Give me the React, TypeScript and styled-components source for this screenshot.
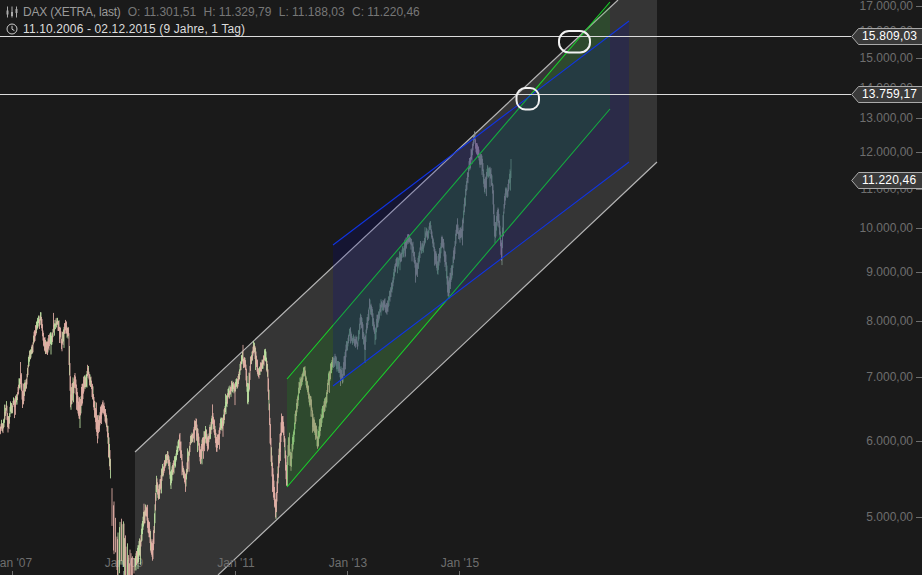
import React from "react";
import styled, { createGlobalStyle } from "styled-components";

const Global = createGlobalStyle`
  html, body { margin: 0; padding: 0; background: #1a1a1a; }
  body { font-family: "Liberation Sans", Arial, sans-serif; }
`;

const Chart = styled.div`
  position: relative;
  width: 922px;
  height: 575px;
  overflow: hidden;
  background: #1a1a1a;
  font-size: 12px;
`;
const Plot = styled.svg`
  position: absolute;
  inset: 0;
  display: block;
`;
const Header = styled.div`
  position: absolute;
  left: 0;
  top: 5px;
  display: flex;
  flex-direction: column;
  gap: 3px;
  align-items: flex-start;
`;
const HeaderRow = styled.div`
  display: flex;
  align-items: center;
  height: 14px;
  padding: 0 5px 0 6px;
  background: #1a1a1a;
  color: #777;
  line-height: 14px;
  white-space: nowrap;
`;
const RowIcon = styled.svg`
  width: 12px;
  height: 12px;
  margin-right: 5px;
  flex: none;
`;
const Title = styled.span`
  color: #999;
  margin-right: 7px;
  letter-spacing: -0.22px;
`;
const Quote = styled.span`
  margin-right: 7.4px;
`;
const Range = styled.span`
  color: #ddd;
  letter-spacing: 0.13px;
`;
const YLabel = styled.div<{ $y: number }>`
  position: absolute;
  right: 0;
  top: ${(p) => p.$y - 7}px;
  height: 16px;
  line-height: 16px;
  color: #6e6e6e;
  display: flex;
  align-items: center;
  gap: 3px;
`;
const Tick = styled.i`
  display: block;
  width: 6px;
  height: 1px;
  background: #6e6e6e;
`;
const XLabel = styled.div<{ $x: number }>`
  position: absolute;
  left: ${(p) => p.$x - 30}px;
  width: 60px;
  text-align: center;
  top: 556px;
  line-height: 14px;
  color: #6e6e6e;
`;
const XTick = styled.i<{ $x: number }>`
  position: absolute;
  left: ${(p) => p.$x}px;
  top: 571px;
  width: 1px;
  height: 4px;
  background: #6e6e6e;
`;
const Tag = styled.div<{ $y: number }>`
  position: absolute;
  left: 851px;
  top: ${(p) => p.$y - 8}px;
  width: 71px;
  height: 17px;
  color: #fff;
  line-height: 17px;
`;
const TagShape = styled.svg`
  position: absolute;
  inset: 0;
`;
const TagText = styled.span`
  position: absolute;
  left: 11px;
  top: 0;
  letter-spacing: 0.2px;
`;

const MAIN: [number, number, number][] = [
  [0,433,3],[7,412,3],[8,426,4],[12,405,3],[18,397,3],[21,378,3],[23,405,6],[27,380,2],[30,355,3],[35,335,4],[38,322,4],[41,318,4],[44,340,5],[47,352,5],[51,338,5],[54,325,2],[58,322,3],[62,345,4],[66,320,4],[69,335,3],[71,405,10],[75,380,5],[80,415,12],[84,385,6],[88,368,3],[92,385,4],[98,430,9],[102,405,4],[105,415,5],[108,430,5],[111,480,8],[113,530,30],[116,535,38],[118,560,30],[120,545,25],[124,540,30],[126,560,25],[128,565,20],[130,570,20],[133,572,8],[140,550,6],[144,520,6],[147,510,5],[150,530,8],[153,552,6],[157,487,5],[159,498,5],[163,472,5],[168,455,3],[171,483,7],[175,462,3],[180,440,3],[183,465,3],[186,478,4],[191,440,3],[196,422,3],[201,460,7],[206,427,4],[208,447,5],[213,422,5],[217,447,5],[223,422,4],[228,395,3],[232,385,4],[237,382,3],[240,370,3],[243,355,3],[246,370,4],[248,400,8],[251,365,3],[255,347,4],[258,370,4],[262,365,3],[265,352,4],[268,372,4],[270,420,5],[272,460,8],[276,510,8],[278,480,6],[282,420,7],[285,440,6],[287,480,6],[289,437,4],[291,462,5],[296,415,4],[300,385,4],[305,370,3],[309,390,4],[313,415,5],[318,440,7],[322,420,5],[327,395,4],[332,365,4],[335,358,4],[339,365,5],[343,375,5],[347,345,3],[350,335,2],[355,338,3],[358,342,3],[361,322,3],[365,345,5],[368,318,3],[370,300,3],[374,325,4],[376,332,5],[380,308,3],[383,302,3],[387,312,4],[392,290,3],[395,272,3],[400,255,3],[407,240,3],[412,245,3],[417,268,6],[421,250,3],[425,243,3],[430,228,2],[434,245,3],[438,268,6],[443,240,3],[446,262,6],[449,295,7],[453,265,4],[457,232,4],[460,235,5],[462,238,3],[465,205,3],[469,170,3],[472,150,5],[475,140,3],[478,155,5],[482,165,5],[485,185,6],[488,170,4],[490,165,3],[493,185,4],[495,235,6],[498,212,3],[500,235,5],[502,252,6],[504,215,3],[506,197,4],[508,198,4],[511,175,3],
];

function interp(x: number) {
  for (let i = 1; i < MAIN.length; i++) {
    const [x0, y0, h0] = MAIN[i - 1];
    const [x1, y1, h1] = MAIN[i];
    if (x <= x1) {
      const t = (x - x0) / (x1 - x0 || 1);
      return { y: y0 + (y1 - y0) * t, h: h0 + (h1 - h0) * t };
    }
  }
  return { y: 175, h: 3 };
}

function zone(x: number) {
  if (x >= 333) return 2;
  if (x >= 287) return 1;
  return 0;
}

const UP = ["#c6eeaa", "#a6cc90", "#7c9586"];
const DOWN = ["#efb8ae", "#c4a898", "#9c8a99"];

function buildBars() {
  let seed = 12345;
  const rnd = () => {
    seed = (seed * 16807) % 2147483647;
    return seed / 2147483647;
  };
  const ups: string[][] = [[], [], []];
  const downs: string[][] = [[], [], []];
  let walk = 0;
  for (let x = 0; x <= 511; x += 0.5) {
    const { y, h } = interp(x);
    const next = interp(x + 0.5).y;
    walk = walk * 0.7 + (rnd() - 0.5) * 7;
    if (x > 110 && x < 135 && rnd() < 0.45) continue;
    const up = next < y ? rnd() < 0.55 : rnd() < 0.2;
    const spike = rnd() < 0.09 ? 4 + rnd() * 8 : 0;
    const spikeUp = rnd() < 0.25 ? spike : 0;
    const lo = Math.min(y, next) + walk;
    const hi = Math.max(y, next) + walk;
    const top = Math.max(0, lo - 1.5 - h * (0.3 + rnd() * 0.7) - spikeUp);
    const bottom = Math.min(575, hi + 1.5 + h * (0.3 + rnd() * 0.7) + (spikeUp ? 0 : spike));
    (up ? ups : downs)[zone(x)].push(`M${x} ${top.toFixed(1)}V${bottom.toFixed(1)}`);
  }
  return [
    ...UP.map((color, i) => ({ color, d: ups[i].join("") })),
    ...DOWN.map((color, i) => ({ color, d: downs[i].join("") })),
  ];
}
const BARS = buildBars();

const Y_LABELS: [string, number][] = [
  ["17.000,00",5],["16.000,00",30],["15.000,00",57],["14.000,00",87],["13.000,00",117],["12.000,00",151],["11.000,00",188],["10.000,00",227],["9.000,00",271],["8.000,00",320],["7.000,00",376],["6.000,00",440],["5.000,00",516],
];
const X_LABELS: [string, number][] = [["Jan '07",13],["Jan '09",124],["Jan '11",236],["Jan '13",348],["Jan '15",460]];
const TAGS: [string, number][] = [["15.809,03",36],["13.759,17",94],["11.220,46",180]];

export default function App() {
  return (
    <Chart>
      <Global />
      <Plot width={922} height={575} viewBox="0 0 922 575">
        <polygon points="135,452 618,0 657,0 657,162 218,575 135,575" fill="#353535" />
        <path d="M135 452L618 0M657 162L218 575" stroke="#b4b4b4" strokeWidth="1.2" fill="none" />
      </Plot>
      {Y_LABELS.map(([t, y]) => (
        <YLabel key={t} $y={y}>{t}<Tick /></YLabel>
      ))}
      {X_LABELS.map(([t, x]) => (
        <React.Fragment key={t}>
          <XLabel $x={x}>{t}</XLabel>
          <XTick $x={x - 1} />
        </React.Fragment>
      ))}
      <Plot width={922} height={575} viewBox="0 0 922 575">
        {BARS.map(({ color, d }) => (
          <path key={color} d={d} stroke={color} strokeWidth="0.8" fill="none" />
        ))}
        <polygon points="287,379 610,2 610,109 287,487" fill="#00d000" fillOpacity="0.13" />
        <path d="M287 379L610 2M287 487L610 109" stroke="#19d02a" strokeWidth="1.1" fill="none" />
        <polygon points="333,245 629,21 629,162 333,386" fill="#0000a0" fillOpacity="0.18" />
        <path d="M333 245L629 21M333 386L629 162" stroke="#1034e0" strokeWidth="1.1" fill="none" />
        <path d="M0 36.5H851M0 94.5H851" stroke="#dcdcdc" strokeWidth="1" fill="none" />
        <rect x="559" y="31" width="31" height="21.5" rx="10" fill="none" stroke="#f2f2f2" strokeWidth="2" />
        <rect x="516.5" y="88" width="22.5" height="21.5" rx="9" fill="none" stroke="#f2f2f2" strokeWidth="2" />
      </Plot>
      <Header>
        <HeaderRow>
          <RowIcon viewBox="0 0 12 12">
            <path d="M1.5 0.5V11.5M6 0.5V11.5M10.5 0.5V11.5" stroke="#aaa" strokeWidth="1" />
            <path d="M0.5 4.5h2v4h-2zM5 6h2v4h-2zM9.5 3h2v4h-2z" fill="#aaa" />
          </RowIcon>
          <Title>DAX (XETRA, last)</Title>
          <Quote>O: 11.301,51</Quote>
          <Quote>H: 11.329,79</Quote>
          <Quote>L: 11.188,03</Quote>
          <Quote>C: 11.220,46</Quote>
        </HeaderRow>
        <HeaderRow>
          <RowIcon viewBox="0 0 12 12">
            <circle cx="6" cy="6" r="5" fill="none" stroke="#ccc" strokeWidth="1" />
            <path d="M6 2.8V6.2L8.4 7.6" fill="none" stroke="#ccc" strokeWidth="1" />
          </RowIcon>
          <Range>11.10.2006 - 02.12.2015 (9 Jahre, 1 Tag)</Range>
        </HeaderRow>
      </Header>
      {TAGS.map(([t, y]) => (
        <Tag key={t} $y={y}>
          <TagShape width={71} height={17} viewBox="0 0 71 17">
            <path d="M71 0.5H7.5L0.7 8.5L7.5 16.5H71" fill="#3a3a3a" stroke="#aaa" strokeWidth="1" />
          </TagShape>
          <TagText>{t}</TagText>
        </Tag>
      ))}
    </Chart>
  );
}
